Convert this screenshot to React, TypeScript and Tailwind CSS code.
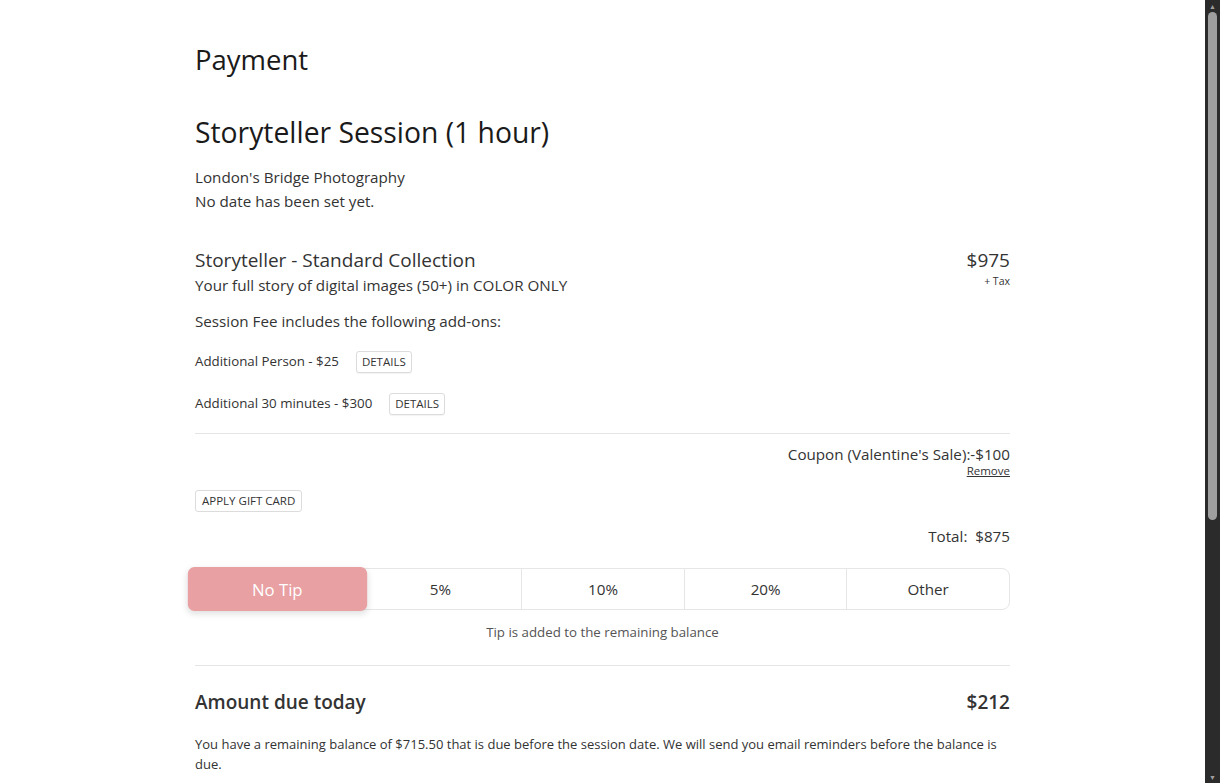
import React from "react";

const tips = ["No Tip", "5%", "10%", "20%", "Other"];

function DetailsButton() {
  return (
    <button className="rounded-[3px] border border-[#dcdcdc] bg-white px-[5px] py-[2px] text-[11.5px] leading-[16px] text-[#333] shadow-[0_1px_1px_rgba(0,0,0,0.05)]">
      DETAILS
    </button>
  );
}

function Scrollbar() {
  return (
    <div className="flex w-[15px] shrink-0 flex-col items-center bg-[#2b2b2b]">
      <div className="flex h-[12px] items-center justify-center text-[7px] leading-none text-[#9f9f9f]">
        ▲
      </div>
      <div className="h-[508px] w-[9px] rounded-full bg-[#9f9f9f]" />
      <div className="flex-1" />
      <div className="flex h-[12px] items-center justify-center text-[7px] leading-none text-[#9f9f9f]">
        ▼
      </div>
    </div>
  );
}

export default function App() {
  const active = 0;

  return (
    <div className="flex h-screen bg-white font-['Open_Sans','Noto_Sans',sans-serif] text-[#333]">
      <main className="flex-1 overflow-hidden">
        <div className="mx-auto max-w-[815px] pt-[40px] pb-[400px]">
          {/* Header */}
          <h1 className="text-[27.5px] leading-[40px] text-[#1a1a1a]">Payment</h1>
          <h2 className="mt-[30px] text-[28.3px] leading-[44px] text-[#1a1a1a]">
            Storyteller Session (1 hour)
          </h2>
          <div className="mt-[11px] text-[15.2px] leading-[24px] text-[#333]">
            <p>London's Bridge Photography</p>
            <p>No date has been set yet.</p>
          </div>

          {/* Collection */}
          <div className="mt-[34px] flex items-start justify-between">
            <div>
              <div className="text-[19px] leading-[27px] text-[#333]">
                Storyteller - Standard Collection
              </div>
              <div className="text-[15.2px] leading-[22px]">
                Your full story of digital images (50+) in COLOR ONLY
              </div>
            </div>
            <div className="text-right">
              <div className="text-[19px] leading-[27px]">$975</div>
              <div className="text-[10.5px] leading-[14px]">+ Tax</div>
            </div>
          </div>

          <p className="mt-[13px] text-[15.2px] leading-[24px]">
            Session Fee includes the following add-ons:
          </p>

          <div className="mt-[18px] flex items-center gap-[17px] text-[13.3px]">
            <span>Additional Person - $25</span>
            <DetailsButton />
          </div>
          <div className="mt-[20px] flex items-center gap-[17px] text-[13.3px]">
            <span>Additional 30 minutes - $300</span>
            <DetailsButton />
          </div>

          <hr className="mt-[18px] border-t border-[#e5e5e5]" />

          {/* Coupon */}
          <div className="mt-[10px] text-right">
            <div className="text-[15.2px] leading-[20px]">
              Coupon (Valentine's Sale):-$100
            </div>
            <div className="text-[11.5px] leading-[14px]">
              <button className="underline">Remove</button>
            </div>
          </div>

          <button className="mt-[12px] rounded-[3px] border border-[#dcdcdc] bg-white px-[6px] py-[2px] text-[11.5px] leading-[16px] text-[#333]">
            APPLY GIFT CARD
          </button>

          <div className="mt-[13px] text-right text-[15.2px] leading-[22px]">
            Total:&nbsp; $875
          </div>

          {/* Tips */}
          <div className="mt-[21px] grid grid-cols-5 rounded-[8px] border border-[#e6e6e6]">
            {tips.map((t, i) => (
              <button
                key={t}
                className={
                  i === active
                    ? "relative z-10 h-[40px] scale-110 rounded-[6px] bg-[#e8a0a2] text-[15.2px] text-white shadow-[0_2px_6px_rgba(0,0,0,0.12)]"
                    : "h-[40px] border-l border-[#e6e6e6] text-[15.2px] text-[#333]"
                }
              >
                {t}
              </button>
            ))}
          </div>
          <p className="mt-[12px] text-center text-[13.3px] leading-[20px] text-[#555]">
            Tip is added to the remaining balance
          </p>

          <hr className="mt-[23px] border-t border-[#e5e5e5]" />

          {/* Amount due */}
          <div className="mt-[21px] flex items-center justify-between text-[19px] font-semibold leading-[30px] text-[#333]">
            <span>Amount due today</span>
            <span>$212</span>
          </div>
          <p className="mt-[17px] text-[13px] leading-[20px]">
            You have a remaining balance of $715.50 that is due before the session date.
            We will send you email reminders before the balance is due.
          </p>
        </div>
      </main>
      <Scrollbar />
    </div>
  );
}
